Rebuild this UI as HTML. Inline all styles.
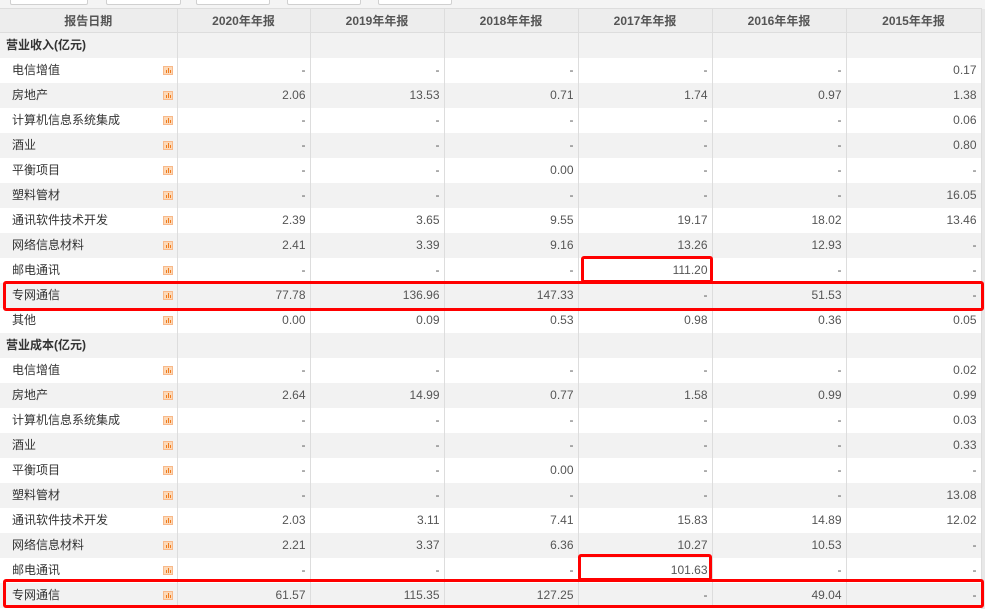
<!DOCTYPE html>
<html><head><meta charset="utf-8"><style>
*{margin:0;padding:0;box-sizing:border-box}
body{width:985px;height:609px;overflow:hidden;background:#fff;font-family:"Liberation Sans","Noto Sans CJK SC",sans-serif;font-size:12px;color:#333;position:relative}
.top{position:absolute;left:0;top:0;width:985px;height:9px;background:#f4f4f4}
.btn{position:absolute;top:-4px;height:9px;border:1px solid #d0d0d0;background:#fff;border-radius:2px}
table{position:absolute;left:0;top:8px;border-collapse:collapse;table-layout:fixed;width:981px}
td,th{height:25px;border-right:1px solid #ddd;padding:0 4px;white-space:nowrap;overflow:hidden;line-height:14px}
th{background:#ededed;color:#555;font-weight:bold;font-size:12px;height:24px;border-top:1px solid #ddd;border-bottom:1px solid #ddd}
td{text-align:right;color:#555}
td.n{text-align:left;padding-left:12px;color:#333;position:relative}
td.g{text-align:left;padding-left:6px;font-weight:bold;color:#333}
tr.s td{background:#f2f2f2}
.ic{position:absolute;left:163px;top:8px;width:10px;height:9px;background:#fcd9b8;border:1px solid #f8b98a}
.ic:before{content:"";position:absolute;left:2px;bottom:1px;width:1px;height:3px;background:#f07b1e;box-shadow:2px -1px 0 0 #f07b1e,4px 0 0 0 #f07b1e}
.ic:after{content:"";position:absolute;left:4px;bottom:1px;width:1px;height:5px;background:#f07b1e}
.red{position:absolute;border:3px solid #f00;border-radius:3px}
.sb{position:absolute;left:981px;top:9px;width:4px;height:600px;background:#e8e8e8}
</style></head><body>
<div class="top"></div>
<div class="btn" style="left:10px;width:78px"></div>
<div class="btn" style="left:106px;width:75px"></div>
<div class="btn" style="left:196px;width:74px"></div>
<div class="btn" style="left:287px;width:74px"></div>
<div class="btn" style="left:378px;width:74px"></div>
<div class="sb"></div>
<table>
<colgroup><col style="width:177px"><col style="width:133px"><col style="width:134px"><col style="width:134px"><col style="width:134px"><col style="width:134px"><col style="width:135px"></colgroup>
<tr><th>报告日期</th><th>2020年年报</th><th>2019年年报</th><th>2018年年报</th><th>2017年年报</th><th>2016年年报</th><th>2015年年报</th></tr>
<tr class="s"><td class="g">营业收入(亿元)</td><td></td><td></td><td></td><td></td><td></td><td></td></tr>
<tr><td class="n">电信增值<i class="ic"></i></td><td>-</td><td>-</td><td>-</td><td>-</td><td>-</td><td>0.17</td></tr>
<tr class="s"><td class="n">房地产<i class="ic"></i></td><td>2.06</td><td>13.53</td><td>0.71</td><td>1.74</td><td>0.97</td><td>1.38</td></tr>
<tr><td class="n">计算机信息系统集成<i class="ic"></i></td><td>-</td><td>-</td><td>-</td><td>-</td><td>-</td><td>0.06</td></tr>
<tr class="s"><td class="n">酒业<i class="ic"></i></td><td>-</td><td>-</td><td>-</td><td>-</td><td>-</td><td>0.80</td></tr>
<tr><td class="n">平衡项目<i class="ic"></i></td><td>-</td><td>-</td><td>0.00</td><td>-</td><td>-</td><td>-</td></tr>
<tr class="s"><td class="n">塑料管材<i class="ic"></i></td><td>-</td><td>-</td><td>-</td><td>-</td><td>-</td><td>16.05</td></tr>
<tr><td class="n">通讯软件技术开发<i class="ic"></i></td><td>2.39</td><td>3.65</td><td>9.55</td><td>19.17</td><td>18.02</td><td>13.46</td></tr>
<tr class="s"><td class="n">网络信息材料<i class="ic"></i></td><td>2.41</td><td>3.39</td><td>9.16</td><td>13.26</td><td>12.93</td><td>-</td></tr>
<tr><td class="n">邮电通讯<i class="ic"></i></td><td>-</td><td>-</td><td>-</td><td>111.20</td><td>-</td><td>-</td></tr>
<tr class="s"><td class="n">专网通信<i class="ic"></i></td><td>77.78</td><td>136.96</td><td>147.33</td><td>-</td><td>51.53</td><td>-</td></tr>
<tr><td class="n">其他<i class="ic"></i></td><td>0.00</td><td>0.09</td><td>0.53</td><td>0.98</td><td>0.36</td><td>0.05</td></tr>
<tr class="s"><td class="g">营业成本(亿元)</td><td></td><td></td><td></td><td></td><td></td><td></td></tr>
<tr><td class="n">电信增值<i class="ic"></i></td><td>-</td><td>-</td><td>-</td><td>-</td><td>-</td><td>0.02</td></tr>
<tr class="s"><td class="n">房地产<i class="ic"></i></td><td>2.64</td><td>14.99</td><td>0.77</td><td>1.58</td><td>0.99</td><td>0.99</td></tr>
<tr><td class="n">计算机信息系统集成<i class="ic"></i></td><td>-</td><td>-</td><td>-</td><td>-</td><td>-</td><td>0.03</td></tr>
<tr class="s"><td class="n">酒业<i class="ic"></i></td><td>-</td><td>-</td><td>-</td><td>-</td><td>-</td><td>0.33</td></tr>
<tr><td class="n">平衡项目<i class="ic"></i></td><td>-</td><td>-</td><td>0.00</td><td>-</td><td>-</td><td>-</td></tr>
<tr class="s"><td class="n">塑料管材<i class="ic"></i></td><td>-</td><td>-</td><td>-</td><td>-</td><td>-</td><td>13.08</td></tr>
<tr><td class="n">通讯软件技术开发<i class="ic"></i></td><td>2.03</td><td>3.11</td><td>7.41</td><td>15.83</td><td>14.89</td><td>12.02</td></tr>
<tr class="s"><td class="n">网络信息材料<i class="ic"></i></td><td>2.21</td><td>3.37</td><td>6.36</td><td>10.27</td><td>10.53</td><td>-</td></tr>
<tr><td class="n">邮电通讯<i class="ic"></i></td><td>-</td><td>-</td><td>-</td><td>101.63</td><td>-</td><td>-</td></tr>
<tr class="s"><td class="n">专网通信<i class="ic"></i></td><td>61.57</td><td>115.35</td><td>127.25</td><td>-</td><td>49.04</td><td>-</td></tr>
</table>
<div class="red" style="left:581px;top:256px;width:132px;height:27px"></div>
<div class="red" style="left:3px;top:281px;width:981px;height:30px"></div>
<div class="red" style="left:578px;top:554px;width:134px;height:27px"></div>
<div class="red" style="left:3px;top:579px;width:981px;height:29px"></div>
</body></html>
